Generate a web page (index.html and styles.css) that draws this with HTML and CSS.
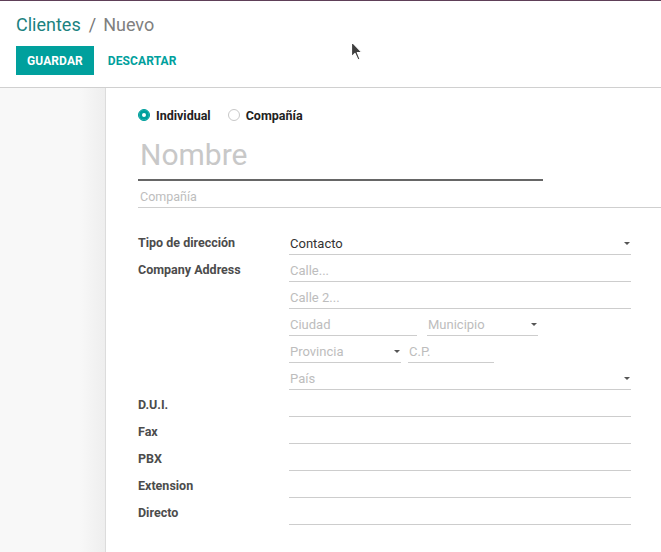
FILE: index.html
```html
<!DOCTYPE html>
<html lang="es">
<head>
<meta charset="utf-8">
<title>Clientes / Nuevo</title>
<link rel="stylesheet" href="styles.css">
</head>
<body>
<div class="app">
  <header class="control-panel">
    <div class="breadcrumb"><a class="crumb-link">Clientes</a><span class="sep">/</span><span class="crumb-active">Nuevo</span></div>
    <div class="buttons">
      <button class="btn btn-primary">GUARDAR</button>
      <button class="btn btn-link">DESCARTAR</button>
    </div>
    <svg class="cursor" width="14" height="22" viewBox="0 0 14 22"><path d="M1.5 1.5 L1.5 17 L5 13.5 L8 20 L10 19 L7.3 12.6 L12 12.6 Z" fill="#3e3e3e" stroke="#fff" stroke-width="1.2" stroke-linejoin="round"/></svg>
  </header>
  <main class="content">
    <div class="gutter"></div>
    <section class="sheet">
      <div class="radios">
        <label class="radio"><span class="dot checked"></span>Individual</label>
        <label class="radio"><span class="dot"></span>Compañía</label>
      </div>
      <div class="title-field"><span class="placeholder">Nombre</span></div>
      <div class="company-field"><span class="placeholder">Compañía</span></div>
      <div class="form">
        <div class="label">Tipo de dirección</div>
        <div class="field select"><span class="value">Contacto</span><span class="caret"></span></div>

        <div class="label">Company Address</div>
        <div class="address">
          <div class="field"><span class="placeholder">Calle...</span></div>
          <div class="field"><span class="placeholder">Calle 2...</span></div>
          <div class="addr-row">
            <div class="field w-city"><span class="placeholder">Ciudad</span></div>
            <div class="field select w-state"><span class="placeholder">Municipio</span><span class="caret"></span></div>
          </div>
          <div class="addr-row">
            <div class="field select w-prov"><span class="placeholder">Provincia</span><span class="caret"></span></div>
            <div class="field w-zip"><span class="placeholder">C.P.</span></div>
          </div>
          <div class="field select"><span class="placeholder">País</span><span class="caret"></span></div>
        </div>

        <div class="label">D.U.I.</div>
        <div class="field"></div>
        <div class="label">Fax</div>
        <div class="field"></div>
        <div class="label">PBX</div>
        <div class="field"></div>
        <div class="label">Extension</div>
        <div class="field"></div>
        <div class="label">Directo</div>
        <div class="field"></div>
      </div>
    </section>
  </main>
</div>
</body>
</html>
```
FILE: styles.css
```css
* { box-sizing: border-box; }
html, body { margin: 0; padding: 0; height: 100%; }
body {
  font-family: Roboto, "Noto Sans", "Liberation Sans", sans-serif;
  font-size: 13px;
  color: #4c4c4c;
  background: #f9f9f9;
  overflow: hidden;
}
.app { display: flex; flex-direction: column; height: 552px; }
.control-panel {
  position: relative;
  background: #fff;
  border-top: 1px solid #5e3f58;
  border-bottom: 1px solid #d0d0d0;
  height: 88px;
  padding: 13px 16px 0;
  flex: none;
}
.breadcrumb { font-size: 18px; line-height: 22px; height: 22px; display: flex; align-items: center; }
.crumb-link { color: #1b827f; }
.sep { color: #777; margin: 0 7px 0 8px; }
.crumb-active { color: #808080; }
.buttons { display: flex; align-items: center; margin-top: 10px; gap: 3px; }
.btn {
  font-family: Roboto, "Noto Sans", "Liberation Sans", sans-serif;
  font-size: 12px; font-weight: 700;
  height: 29px; border: 0; padding: 0 11px; letter-spacing: 0.1px;
  cursor: pointer;
}
.btn-primary { background: #00a09d; color: #fff; }
.btn-link { background: transparent; color: #00a09d; }
.cursor { position: absolute; left: 350px; top: 39px; }

.content { flex: 1; display: flex; min-height: 0; }
.gutter {
  width: 106px; flex: none;
  background: linear-gradient(to right, #f8f8f8 0, #f8f8f8 80px, #eeeeee 105px);
  border-right: 1px solid #dcdcdc;
}
.sheet { flex: 1; background: #fff; padding: 19px 0 0 32px; min-width: 0; }
.radios { display: flex; align-items: center; height: 16px; gap: 17px; }
.radio { display: flex; align-items: center; font-weight: 700; color: #222; font-size: 12.5px; }
.dot {
  width: 12px; height: 12px; border-radius: 50%;
  border: 1px solid #c8c8c8; background: #fff; margin-right: 6px;
}
.dot.checked { background: #00a09d; border-color: #00a09d; box-shadow: inset 0 0 0 3px #00a09d, inset 0 0 0 6px #fff; }

.title-field {
  width: 405px; margin-top: 17px;
  border-bottom: 2px solid #666;
  height: 41px;
  font-size: 30px; line-height: 29px;
}
.company-field {
  margin-top: 6px;
  border-bottom: 1px solid #cfcfcf;
  height: 21px; font-size: 12.5px; line-height: 20px;
  padding-left: 2px;
}
.placeholder { color: #bdbdbd; }
.title-field .placeholder { color: #c8c8c8; padding-left: 2px; }

.form {
  display: grid;
  grid-template-columns: 151px 342px;
  margin-top: 20px;
  row-gap: 0;
}
.label {
  font-weight: 700; font-size: 12.5px; color: #4c4c4c;
  height: 27px; line-height: 30px;
}
.field {
  position: relative;
  height: 27px; line-height: 30px;
  border-bottom: 1px solid #cdcdcd;
  padding-left: 1px;
  display: flex; align-items: center;
}
.field .value, .field .placeholder { line-height: 1; padding-top: 4px; }
.value { color: #333; }
.caret {
  position: absolute; right: 1px; top: 14px;
  width: 0; height: 0;
  border-left: 3px solid transparent; border-right: 3px solid transparent;
  border-top: 3px solid #555;
}
.address { display: flex; flex-direction: column; }
.addr-row { display: flex; }
.w-city { width: 128px; margin-right: 10px; }
.w-state { width: 111px; }
.w-state .caret { right: 1px; }
.w-prov { width: 112px; margin-right: 7px; }
.w-zip { width: 86px; }
```
